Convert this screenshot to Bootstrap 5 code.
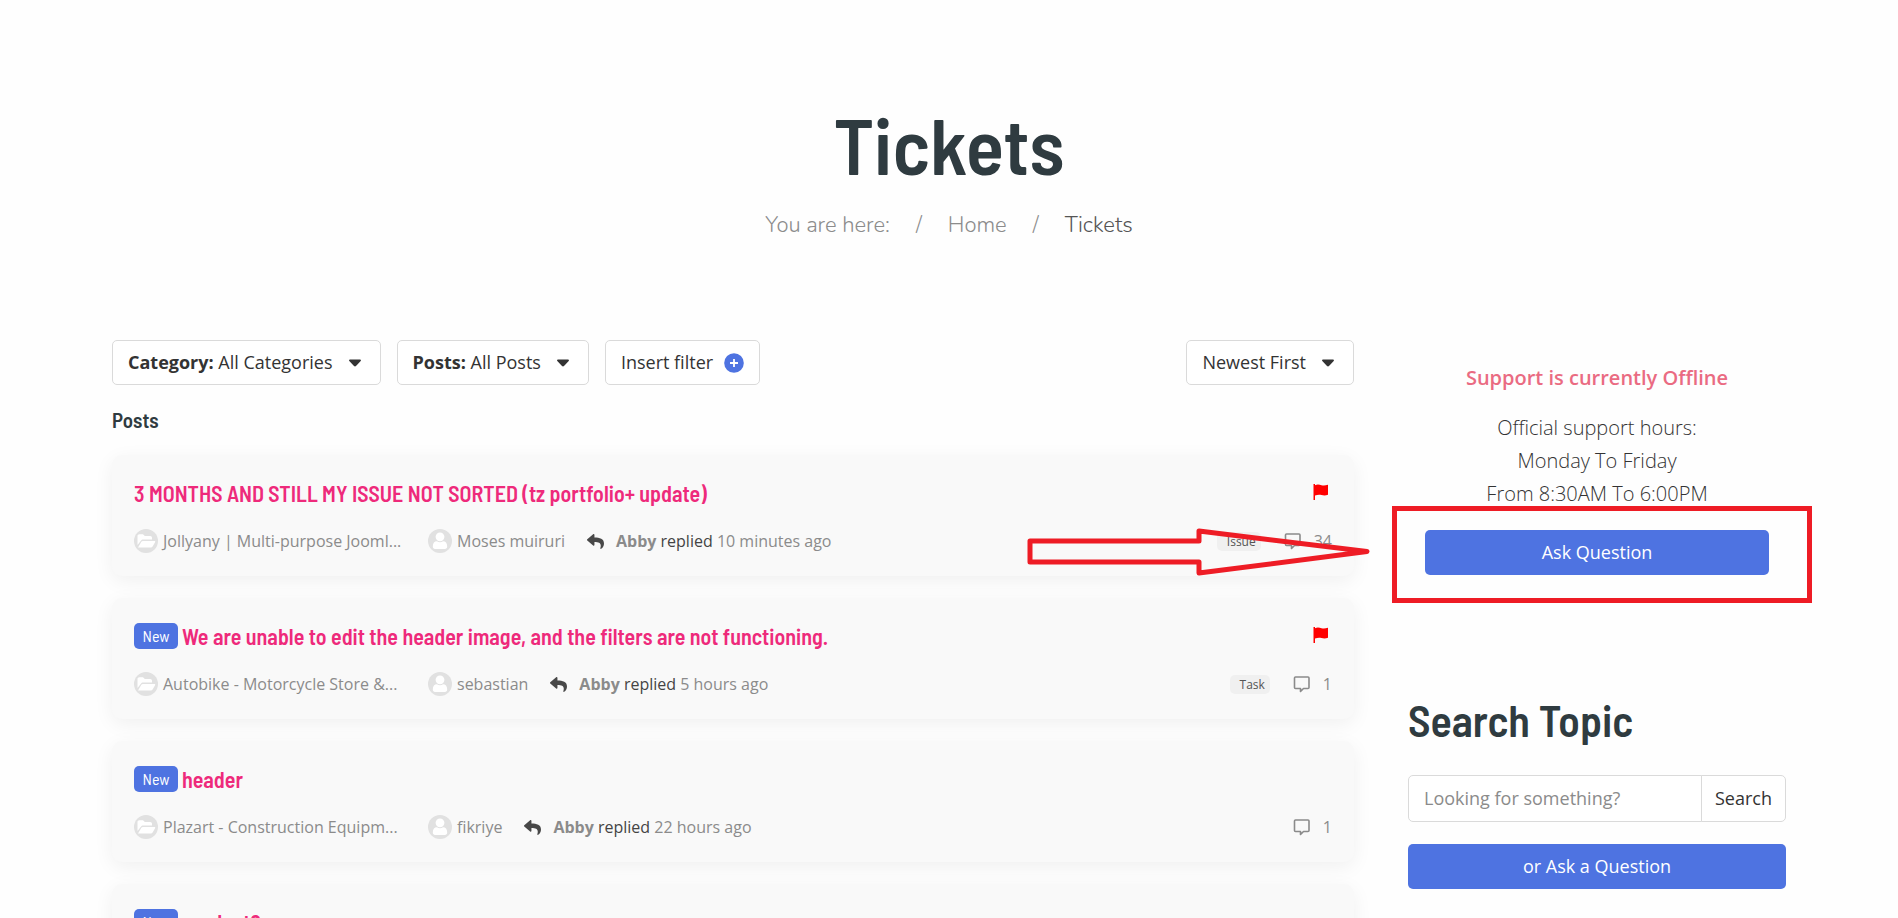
<!DOCTYPE html>
<html lang="en">
<head>
<meta charset="utf-8">
<meta name="viewport" content="width=device-width, initial-scale=1">
<title>Tickets</title>
<link href="https://cdn.jsdelivr.net/npm/bootstrap@5.3.0/dist/css/bootstrap.min.css" rel="stylesheet">
<style>
  :root { --brand: #4e73e1; --ink: #2f3b40; --pink: #ee2a7b; --line: #dadada; --mark-red: #ee1c25; }
  body { font-family: "Segoe UI", "Open Sans", "Noto Sans", sans-serif; font-size: 18px; line-height: 27px; color: #333; background: #fefefe; }
  .display-face { font-family: "Barlow Semi Condensed", "Liberation Sans Narrow", "Roboto", sans-serif; color: var(--ink); font-weight: 600; }
  .page-title { font-size: 79px; line-height: 92px; padding-top: 98px; }
  .crumbs { font-family: "Nunito", "Lato", sans-serif; font-weight: 300; font-size: 22px; line-height: 30px; color: #8c8c8c; gap: 26px; margin-top: 20px; margin-bottom: 100px; }
  .crumbs a { color: inherit; text-decoration: none; }
  .crumbs .active { color: #555; }
  .site-wrap { max-width: 1674px; }
  .site-row { --bs-gutter-x: 54px; }
  .btn { font-size: 18px; line-height: 27px; padding: 8px 15px; border-radius: 5px; }
  .btn-filter { border: 1px solid var(--line); background: #fff; color: #333; display: inline-flex; align-items: center; }
  .btn-filter svg { margin-left: 16px; margin-right: 4px; }
  .btn-filter .plus { margin-left: 11px; margin-right: 0; }
  .btn-brand { background: var(--brand); color: #fff; }
  .btn-brand:hover { background: #3f62cc; color: #fff; }
  .list-title { font-size: 21px; line-height: 28px; margin: 21px 0; }
  .ticket { background: #f9f9f9; border: 0; border-radius: 10px; padding: 22px; margin-bottom: 22px; min-height: 121px; box-shadow: 0 5px 20px rgba(0,0,0,.06); }
  .ticket-title { font-size: 22px; line-height: 32px; }
  .ticket-title a { color: var(--pink); text-decoration: none; }
  .flag { margin: 7px 3px 0 0; }
  .new-tag { font-family: "Barlow Semi Condensed", "Liberation Sans Narrow", "Roboto", sans-serif; background: var(--brand); color: #fff; font-size: 16px; line-height: 26px; font-weight: 400; border-radius: 5px; width: 44px; justify-content: center; display: inline-flex; margin-right: 4px; }
  .meta { font-size: 16px; line-height: 24px; color: #8b8b8b; margin-top: 20px; }
  .meta-verb { color: #444; }
  .meta-place { width: 294px; gap: 5px; }
  .meta-user { gap: 5px; margin-right: 22px; }
  .kind { background: #f0f0f0; color: #555; font-size: 12px; line-height: 19px; border-radius: 5px; padding: 0 5px 0 10px; margin-right: 23px; }
  .count { gap: 12px; }
  .offline { font-size: 20px; line-height: 30px; font-weight: 600; color: #ea6b82; }
  .hours { font-size: 20px; line-height: 33px; font-weight: 300; margin-top: 18px; }
  .support { padding: 23px 17px 0; }
  .ask-area { margin-top: 20px; }
  .ask-area .btn { padding: 9px 15px; }
  .mark-box { left: -33px; right: -43px; top: -24px; bottom: -28px; border: 5px solid var(--mark-red); pointer-events: none; }
  .mark-arrow { right: -17px; top: 72px; pointer-events: none; z-index: 2; }
  .search-title { font-size: 44px; line-height: 52px; margin-top: 119px; margin-bottom: 29px; }
  .search-row .form-control { font-size: 18px; line-height: 29px; padding: 8px 15px; border-color: var(--line); border-radius: 5px; box-shadow: none; }
  .search-row .form-control::placeholder { color: #8b8b8b; }
  .search-row .btn { border: 1px solid var(--line); background: #fff; color: #333; padding: 8px 13px; }
  .ask-alt { margin-top: 22px; padding: 9px 15px; border: 0; }
</style>
</head>
<body>
<svg class="d-none" xmlns="http://www.w3.org/2000/svg">
  <symbol id="caret" viewBox="0 0 12 8"><path d="M1 .5h10c1 0 1.300.8.7 1.400L7 7c-.6.6-1.400.6-2 0L.3 1.900C-.3 1.300 0 .5 1 .5z" fill="#333"/></symbol>
  <symbol id="folder" viewBox="0 0 24 24"><circle cx="12" cy="12" r="12" fill="#e1e1e1"/><path d="M3.500 16V7c0-1 .8-1.800 1.800-1.800h3.700l1.800 1.800h5.400c1 0 1.800.8 1.800 1.800v1.700H9.200c-1 0-1.800.4-2.300 1.300z" fill="#fff"/><path d="M4 18.400l3.200-5.400c.4-.7 1-1.100 1.800-1.100h11.500c.7 0 1 .6.7 1.200l-2.600 4.300c-.4.700-1 1-1.700 1z" fill="#fff"/></symbol>
  <symbol id="person" viewBox="0 0 24 24"><circle cx="12" cy="12" r="12" fill="#e1e1e1"/><circle cx="12" cy="7.800" r="4.400" fill="#fff"/><path d="M4.800 17.500c0-3.300 1.700-5.200 4.100-5.200 2 1.200 4.200 1.200 6.200 0 2.400 0 4.100 1.900 4.100 5.200 0 1.600-.9 2.400-2.300 2.400H7.100c-1.400 0-2.300-.8-2.300-2.400z" fill="#fff"/></symbol>
  <symbol id="reply" viewBox="0 0 512 512"><path d="M8.300 189.800 184.300 37.900C199.700 24.500 224 35.300 224 56v80c160.600 1.900 288 34 288 186.300 0 61.400-39.600 122.300-83.300 154.100-13.700 9.900-33.100-2.500-28.100-18.600C446 312.800 379.100 274.200 224 272v88c0 20.700-24.300 31.500-39.700 18.200l-176-152c-11.100-9.600-11.100-26.800 0-36.400z" fill="#484848"/></symbol>
  <symbol id="flag" viewBox="0 0 16 16"><path d="M.5 0h1.500v1.200C5 0 6.500.8 8.500 1.200s4 .3 6.500-.4v10c-2.500.8-4.500.7-6.500.2s-4-.4-6.500.4V16H.5z" fill="#f00"/></symbol>
  <symbol id="chat" viewBox="0 0 18 17"><path d="M2.500 1h12.500q1 0 1 1v9.500q0 1-1 1h-4.500L7.500 15.500v-3h-5q-1 0-1-1V2q0-1 1-1z" fill="none" stroke="#8b8b8b" stroke-width="1.600" stroke-linejoin="round"/></symbol>
</svg>

<div class="vh-100 overflow-hidden">
  <header class="text-center">
    <h1 class="display-face page-title m-0">Tickets</h1>
    <nav aria-label="Breadcrumb" class="crumbs d-flex justify-content-center">
      <span>You are here:</span><span>/</span><a href="#">Home</a><span>/</span><span class="active">Tickets</span>
    </nav>
  </header>

  <div class="container-fluid site-wrap p-0">
    <div class="row site-row">
      <main class="col-9">
        <div class="d-flex gap-3">
          <button type="button" class="btn btn-filter"><span><b>Category:</b> All Categories</span><svg width="12" height="8"><use href="#caret"/></svg></button>
          <button type="button" class="btn btn-filter"><span><b>Posts:</b> All Posts</span><svg width="12" height="8"><use href="#caret"/></svg></button>
          <button type="button" class="btn btn-filter">Insert filter<svg class="plus" width="20" height="20" viewBox="0 0 20 20"><circle cx="10" cy="10" r="9.800" fill="#4e73e1"/><path d="M10 6v8M6 10h8" stroke="#fff" stroke-width="1.800"/></svg></button>
          <button type="button" class="btn btn-filter ms-auto">Newest First<svg width="12" height="8"><use href="#caret"/></svg></button>
        </div>
        <h2 class="display-face list-title">Posts</h2>

        <article class="card ticket">
          <div class="d-flex justify-content-between">
            <h3 class="display-face ticket-title m-0"><a href="#">3 MONTHS AND STILL MY ISSUE NOT SORTED (tz portfolio+ update)</a></h3>
            <svg class="flag" width="16" height="16"><use href="#flag"/></svg>
          </div>
          <div class="meta d-flex align-items-center">
            <span class="meta-place d-flex"><svg width="24" height="24"><use href="#folder"/></svg>Jollyany | Multi-purpose Jooml...</span>
            <span class="meta-user d-flex"><svg width="24" height="24"><use href="#person"/></svg>Moses muiruri</span>
            <svg class="me-2" width="17" height="17"><use href="#reply"/></svg>
            <span class="ms-1"><b>Abby</b> <span class="meta-verb">replied</span> 10 minutes ago</span>
            <span class="kind ms-auto">Issue</span>
            <span class="count d-flex align-items-center"><svg width="18" height="17"><use href="#chat"/></svg>34</span>
          </div>
          <svg class="mark-arrow position-absolute" width="344" height="50" viewBox="0 0 344 50"><path d="M3 14H172V4L340 24.500 172 46V35H3z" fill="none" stroke="#ee1c25" stroke-width="5" stroke-linejoin="round"/></svg>
        </article>

        <article class="card ticket">
          <div class="d-flex justify-content-between">
            <h3 class="display-face ticket-title m-0 d-flex align-items-center"><span class="new-tag">New</span><a href="#">We are unable to edit the header image, and the filters are not functioning.</a></h3>
            <svg class="flag" width="16" height="16"><use href="#flag"/></svg>
          </div>
          <div class="meta d-flex align-items-center">
            <span class="meta-place d-flex"><svg width="24" height="24"><use href="#folder"/></svg>Autobike - Motorcycle Store &amp;...</span>
            <span class="meta-user d-flex"><svg width="24" height="24"><use href="#person"/></svg>sebastian</span>
            <svg class="me-2" width="17" height="17"><use href="#reply"/></svg>
            <span class="ms-1"><b>Abby</b> <span class="meta-verb">replied</span> 5 hours ago</span>
            <span class="kind ms-auto">Task</span>
            <span class="count d-flex align-items-center"><svg width="18" height="17"><use href="#chat"/></svg>1</span>
          </div>
        </article>

        <article class="card ticket">
          <h3 class="display-face ticket-title m-0 d-flex align-items-center"><span class="new-tag">New</span><a href="#">header</a></h3>
          <div class="meta d-flex align-items-center">
            <span class="meta-place d-flex"><svg width="24" height="24"><use href="#folder"/></svg>Plazart - Construction Equipm...</span>
            <span class="meta-user d-flex"><svg width="24" height="24"><use href="#person"/></svg>fikriye</span>
            <svg class="me-2" width="17" height="17"><use href="#reply"/></svg>
            <span class="ms-1"><b>Abby</b> <span class="meta-verb">replied</span> 22 hours ago</span>
            <span class="count d-flex align-items-center ms-auto"><svg width="18" height="17"><use href="#chat"/></svg>1</span>
          </div>
        </article>

        <article class="card ticket">
          <h3 class="display-face ticket-title m-0 d-flex align-items-center"><span class="new-tag">New</span><a href="#">product?</a></h3>
        </article>
      </main>

      <aside class="col-3">
        <section class="support text-center">
          <p class="offline m-0">Support is currently Offline</p>
          <p class="hours mb-0">Official support hours:<br>Monday To Friday<br>From 8:30AM To 6:00PM</p>
          <div class="ask-area position-relative">
            <button type="button" class="btn btn-brand border-0 w-100">Ask Question</button>
            <div class="mark-box position-absolute"></div>
          </div>
        </section>
        <h2 class="display-face search-title">Search Topic</h2>
        <form class="search-row input-group">
          <input type="search" class="form-control" aria-label="Search topics" placeholder="Looking for something?">
          <button type="submit" class="btn">Search</button>
        </form>
        <button type="button" class="btn btn-brand ask-alt w-100">or Ask a Question</button>
      </aside>
    </div>
  </div>
</div>
<script src="https://cdn.jsdelivr.net/npm/bootstrap@5.3.0/dist/js/bootstrap.bundle.min.js"></script>
</body>
</html>
